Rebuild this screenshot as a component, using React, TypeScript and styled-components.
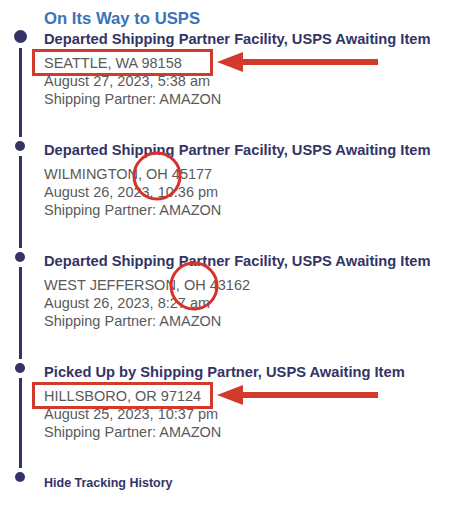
import React from "react";
import styled, { createGlobalStyle } from "styled-components";

const NAVY = "#333366";
const BLUE = "#3a74b8";
const GREY = "#5a5a5a";
const RED = "#d23a2b";

const GlobalStyle = createGlobalStyle`
  html, body {
    margin: 0;
    padding: 0;
    background: #ffffff;
  }
  body {
    font-family: "Liberation Sans", Arial, Helvetica, sans-serif;
  }
`;

const Page = styled.div`
  width: 455px;
  height: 506px;
  padding-top: 9px;
  box-sizing: border-box;
  overflow: hidden;
`;

const StatusHeading = styled.h2`
  margin: 0 0 1px 44px;
  font-size: 16.7px;
  line-height: 20px;
  font-weight: 700;
  color: ${BLUE};
`;

const Timeline = styled.ol`
  list-style: none;
  margin: 0;
  padding: 0;
`;

const EventRow = styled.li`
  display: grid;
  grid-template-columns: 44px 1fr;
`;

const Rail = styled.div`
  width: 40px;
  display: flex;
  flex-direction: column;
  align-items: center;
`;

const Dot = styled.span<{ $size: number }>`
  display: block;
  flex: none;
  width: ${(p) => p.$size}px;
  height: ${(p) => p.$size}px;
  border-radius: 50%;
  background: ${NAVY};
`;

const RailLine = styled.span`
  display: block;
  flex: 1;
  width: 3px;
  margin: 5px 0 4px;
  background: ${NAVY};
`;

const Content = styled.div<{ $bottom: number }>`
  min-width: 0;
  position: relative;
  padding-bottom: ${(p) => p.$bottom}px;
`;

const EventTitle = styled.div`
  font-size: 14.7px;
  line-height: 18px;
  font-weight: 700;
  color: ${NAVY};
  white-space: nowrap;
`;

const Detail = styled.div`
  font-size: 14.5px;
  line-height: 18px;
  color: ${GREY};
  white-space: nowrap;
`;

const LocationLine = styled(Detail)`
  position: relative;
  margin-top: 6px;
`;

const HighlightBox = styled.span`
  position: absolute;
  left: -12px;
  top: -5px;
  width: 181px;
  height: 27px;
  box-sizing: border-box;
  border: 3px solid ${RED};
  pointer-events: none;
`;

const Arrow = styled.svg`
  position: absolute;
  left: 173px;
  top: -2px;
  width: 161px;
  height: 20px;
  pointer-events: none;
`;

const Ring = styled.svg<{ $left: number; $top: number }>`
  position: absolute;
  left: ${(p) => p.$left}px;
  top: ${(p) => p.$top}px;
  width: 50px;
  height: 50px;
  pointer-events: none;
`;

const HideLink = styled.a`
  display: block;
  margin-top: 3px;
  font-size: 12.5px;
  line-height: 16px;
  font-weight: 700;
  color: ${NAVY};
  text-decoration: none;
`;

type TrackEvent = {
  title: string;
  location: string;
  date: string;
  partner: string;
  boxed?: boolean;
  ring?: { left: number; top: number };
  dot: number;
  bottom: number;
};

const events: TrackEvent[] = [
  {
    title: "Departed Shipping Partner Facility, USPS Awaiting Item",
    location: "SEATTLE, WA 98158",
    date: "August 27, 2023, 5:38 am",
    partner: "Shipping Partner: AMAZON",
    boxed: true,
    dot: 13,
    bottom: 33,
  },
  {
    title: "Departed Shipping Partner Facility, USPS Awaiting Item",
    location: "WILMINGTON, OH 45177",
    date: "August 26, 2023, 10:36 pm",
    partner: "Shipping Partner: AMAZON",
    ring: { left: 88, top: 10 },
    dot: 10,
    bottom: 33,
  },
  {
    title: "Departed Shipping Partner Facility, USPS Awaiting Item",
    location: "WEST JEFFERSON, OH 43162",
    date: "August 26, 2023, 8:27 am",
    partner: "Shipping Partner: AMAZON",
    ring: { left: 125, top: 9 },
    dot: 10,
    bottom: 33,
  },
  {
    title: "Picked Up by Shipping Partner, USPS Awaiting Item",
    location: "HILLSBORO, OR 97124",
    date: "August 25, 2023, 10:37 pm",
    partner: "Shipping Partner: AMAZON",
    boxed: true,
    dot: 10,
    bottom: 31,
  },
];

function PointerArrow() {
  return (
    <Arrow viewBox="0 0 161 20" aria-hidden="true">
      <polygon points="0,10 26,0 26,7 161,7 161,13 26,13 26,20" fill={RED} />
    </Arrow>
  );
}

function CircleMark({ left, top }: { left: number; top: number }) {
  return (
    <Ring $left={left} $top={top} viewBox="0 0 50 50" aria-hidden="true">
      <circle cx="25" cy="25" r="23" fill="none" stroke="#d8302a" strokeWidth="3" />
    </Ring>
  );
}

export default function App() {
  return (
    <>
      <GlobalStyle />
      <Page>
        <StatusHeading>On Its Way to USPS</StatusHeading>
        <Timeline>
          {events.map((ev, i) => (
            <EventRow key={i}>
              <Rail>
                <Dot $size={ev.dot} />
                <RailLine />
              </Rail>
              <Content $bottom={ev.bottom}>
                <EventTitle>{ev.title}</EventTitle>
                <LocationLine>
                  {ev.location}
                  {ev.boxed && (
                    <>
                      <HighlightBox />
                      <PointerArrow />
                    </>
                  )}
                </LocationLine>
                <Detail>{ev.date}</Detail>
                <Detail>{ev.partner}</Detail>
                {ev.ring && <CircleMark left={ev.ring.left} top={ev.ring.top} />}
              </Content>
            </EventRow>
          ))}
          <EventRow>
            <Rail>
              <Dot $size={10} />
            </Rail>
            <Content $bottom={0}>
              <HideLink href="#">Hide Tracking History</HideLink>
            </Content>
          </EventRow>
        </Timeline>
      </Page>
    </>
  );
}
